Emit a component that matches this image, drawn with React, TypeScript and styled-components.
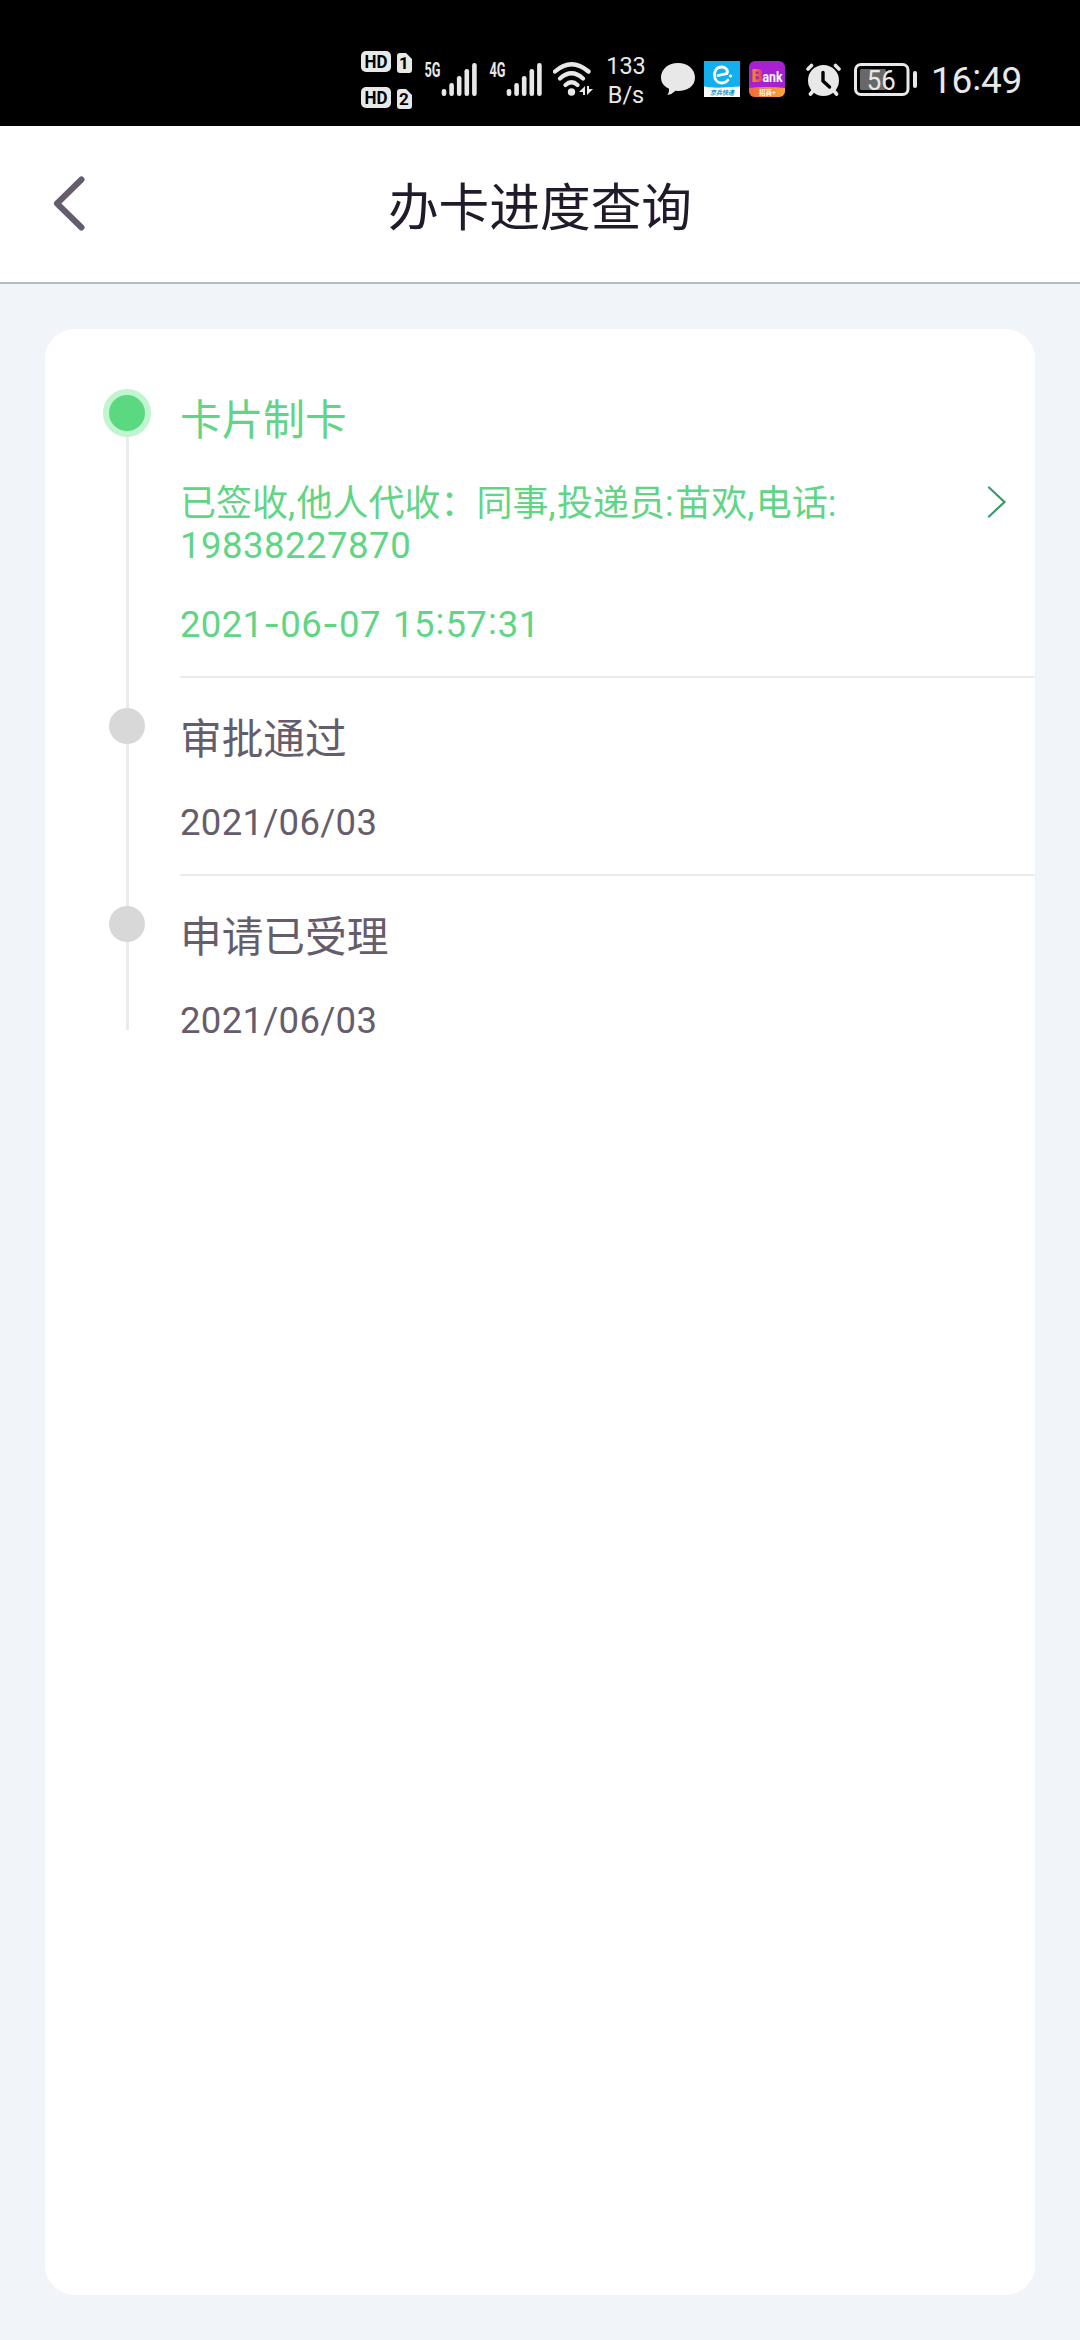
import React from 'react';
import styled, { createGlobalStyle } from 'styled-components';

const INK = '#e8e8e8';
const UI_FONT = `Roboto, 'Noto Sans CJK SC', sans-serif`;

const GlobalStyle = createGlobalStyle`
  html, body { margin: 0; padding: 0; }
  body { background: #f1f5f9; font-family: ${UI_FONT}; }
  * { box-sizing: border-box; }
  svg { display: block; flex: none; }
`;

const Screen = styled.div`
  width: 1080px;
  height: 2340px;
  display: flex;
  flex-direction: column;
  background: #f1f5f9;
  overflow: hidden;
`;

const StatusBar = styled.div`
  flex: none;
  height: 126px;
  padding: 32px 61px 0 0;
  display: flex;
  justify-content: flex-end;
  align-items: center;
  background: #000;
  color: ${INK};
`;

const StatusItem = styled.div<{ $before: number; $width: number }>`
  flex: none;
  width: ${(p) => p.$width}px;
  margin-left: ${(p) => p.$before}px;
`;

const Speed = styled.div`
  padding-top: 3px;
  font-size: 23.5px;
  line-height: 28.5px;
  text-align: center;
  white-space: nowrap;
`;

const Clock = styled.div`
  padding-top: 4px;
  font-size: 37px;
  line-height: 40px;
  letter-spacing: -0.2px;
  white-space: nowrap;
`;

const RaisedColon = styled.span`
  vertical-align: 3px;
  line-height: 0;
`;

const Header = styled.header`
  flex: none;
  height: 158px;
  display: grid;
  grid-template-columns: 140px 1fr 140px;
  align-items: center;
  background: #fff;
  border-bottom: 2px solid #b3bbc4;
`;

const BackButton = styled.button`
  width: 140px;
  height: 60px;
  margin: 0;
  padding: 0 0 0 52px;
  border: 0;
  background: none;
  display: flex;
  align-items: center;
`;

const Title = styled.h1`
  margin: 9px 0 0;
  text-align: center;
  font-size: 50.7px;
  line-height: 60px;
  font-weight: 400;
  color: #201a2b;
`;

const Card = styled.main`
  flex: 1;
  margin: 45px;
  padding-top: 30px;
  background: #fff;
  border-radius: 30px;
`;

const Step = styled.section<{ $height: number }>`
  display: grid;
  grid-template-columns: 135px 1fr;
  grid-template-rows: 100%;
  height: ${(p) => p.$height}px;
`;

const Rail = styled.div`
  width: 48px;
  margin-left: 58px;
  display: flex;
  flex-direction: column;
  align-items: center;
`;

const Line = styled.div<{ $hidden?: boolean; $length?: number }>`
  width: 3px;
  margin-left: 1px;
  flex: ${(p) => (p.$length ? `0 0 ${p.$length}px` : '1')};
  background: ${(p) => (p.$hidden ? 'transparent' : '#ebebeb')};
`;

const Dot = styled.div<{ $active?: boolean }>`
  flex: none;
  width: ${(p) => (p.$active ? 48 : 36)}px;
  height: ${(p) => (p.$active ? 48 : 36)}px;
  border-radius: 50%;
  border: ${(p) => (p.$active ? '6px solid #c0f5cf' : '0')};
  background: ${(p) => (p.$active ? '#5bd980' : '#d8d8d8')};
`;

const StepBody = styled.div<{ $active?: boolean; $divided?: boolean }>`
  display: flex;
  flex-direction: column;
  padding-top: 41px;
  border-bottom: ${(p) => (p.$divided ? '2px solid #ebebeb' : '0')};
  color: ${(p) => (p.$active ? '#5fd585' : '#655d6c')};
`;

const StepTitle = styled.h2`
  margin: 0 0 41px;
  font-size: 41.7px;
  line-height: 42px;
  font-weight: 400;
`;

const Detail = styled.div`
  display: flex;
  justify-content: space-between;
  height: 84px;
  margin-bottom: 36px;
  padding-right: 28px;
`;

const DetailText = styled.p`
  margin: 0;
  width: 700px;
  font-size: 36px;
  line-height: 42px;
`;

const Punctuation = styled.span`
  padding-right: 1.4px;
`;

const Arrow = styled.span`
  padding-top: 3px;
`;

const Digits = styled.span`
  font-size: 36.5px;
  letter-spacing: 0.5px;
`;

const DateText = styled.time`
  font-size: 36.5px;
  line-height: 42px;
  letter-spacing: 0.3px;
  word-spacing: 3px;
  white-space: nowrap;
`;

const Dash = styled.span`
  font-family: Inter, sans-serif;
`;

const DateColon = styled(RaisedColon)`
  padding: 0 0.8px;
`;

type StepData = {
  title: string;
  date: string;
  height: number;
  detail?: string;
  phone?: string;
};

const steps: StepData[] = [
  {
    title: '卡片制卡',
    detail: '已签收,他人代收：同事,投递员:苗欢,电话:',
    phone: '19838227870',
    date: '2021-06-07 15:57:31',
    height: 319,
  },
  { title: '审批通过', date: '2021/06/03', height: 198 },
  { title: '申请已受理', date: '2021/06/03', height: 154 },
];

const HdIcon = () => (
  <svg width="51" height="60" viewBox="0 -2 51 60">
    {[0, 36].map((y, i) => (
      <g key={y} transform={`translate(0 ${y})`}>
        <rect width="30" height="21" rx="5" fill={INK} />
        <text x="15" y="17" textAnchor="middle" textLength="23" lengthAdjust="spacingAndGlyphs" fontFamily="Roboto" fontWeight="700" fontSize="18.5" fill="#000">HD</text>
        <path d="M39 2h6l6 6v11q0 3-3 3h-9q-3 0-3-3V5q0-3 3-3z" fill={INK} />
        <text x="43" y="18" textAnchor="middle" fontFamily="Roboto" fontWeight="700" fontSize="17" fill="#000">{i + 1}</text>
      </g>
    ))}
  </svg>
);

const SignalIcon = ({ label }: { label: string }) => (
  <svg width="53" height="46" viewBox="0 -6 53 46">
    <text x="0.5" y="14.500" textLength="16" lengthAdjust="spacingAndGlyphs" fontFamily="Roboto" fontWeight="700" fontSize="20" fill={INK}>{label}</text>
    {[7, 13, 20, 27, 33].map((h, i) => (
      <rect key={h} x={17.7 + i * 7.6} y={34 - h} width="4.6" height={h} rx="2.2" fill={INK} />
    ))}
  </svg>
);

const WifiIcon = () => (
  <svg width="40" height="34" viewBox="0 0 40 34">
    <g fill="none" stroke={INK} strokeWidth="4.300" strokeLinecap="round">
      <path d="M2 9.500Q18.500-5 35.500 9.500" />
      <path d="M7 16.500Q18.500 6 30 16.500" />
      <path d="M12.500 23Q18.500 17.500 24.500 23" />
    </g>
    <circle cx="18.500" cy="30" r="3.700" fill={INK} />
    <path d="M26 30l6-6v9h-2v-3zM34 24v9l6-6h-4v-3z" fill={INK} />
  </svg>
);

const BubbleIcon = () => (
  <svg width="34" height="33" viewBox="0 0 34 33">
    <path d="M17 0C26.500 0 34 6 34 14.500S26.500 28 17 28L14.500 27.800Q11 31.500 6.500 32Q8.500 29.500 8 25.800C3 23.500 0 19.500 0 14.500C0 6 7.500 0 17 0z" fill={INK} />
  </svg>
);

const ExpressAppIcon = () => (
  <svg width="36" height="36" viewBox="0 0 36 36">
    <rect width="36" height="36" fill="#12b0f0" />
    <path d="M0 25.500Q8 27 18 26.500T36 25.500V36H0z" fill="#fff" />
    <path d="M14 14.500L23 12.500C24.500 8.500 21 6 17.500 6C12.500 6 10.500 10 10.500 14C10.500 19 13.500 22 18 22C21 22 22.500 21 24 19" fill="none" stroke="#fff" strokeWidth="2.800" strokeLinecap="round" />
    <circle cx="26.500" cy="15" r="1.600" fill="#fff" />
    <text x="18" y="34" textAnchor="middle" textLength="24" lengthAdjust="spacingAndGlyphs" fontFamily="Noto Sans CJK SC" fontWeight="700" fontStyle="italic" fontSize="6.500" fill="#1690c8">京兵快递</text>
  </svg>
);

const BankAppIcon = () => (
  <svg width="36" height="36" viewBox="0 0 36 36">
    <defs>
      <clipPath id="bankClip"><rect width="36" height="36" rx="6" /></clipPath>
      <linearGradient id="bankBase"><stop stopColor="#f46a3a" /><stop offset="1" stopColor="#f8a53a" /></linearGradient>
      <linearGradient id="bankLetter"><stop stopColor="#f5923a" /><stop offset="1" stopColor="#e83c48" /></linearGradient>
    </defs>
    <g clipPath="url(#bankClip)">
      <rect width="36" height="36" fill="#a721d2" />
      <path d="M0 27Q18 25 36 27V36H0z" fill="url(#bankBase)" />
      <text x="2.500" y="21" textLength="11" lengthAdjust="spacingAndGlyphs" fontFamily="Roboto" fontWeight="900" fontSize="18.500" fill="url(#bankLetter)">B</text>
      <text x="13.500" y="20.500" textLength="20" lengthAdjust="spacingAndGlyphs" fontFamily="Roboto" fontWeight="700" fontSize="14.500" fill="#fff">ank</text>
      <text x="18.500" y="34" textAnchor="middle" fontFamily="Noto Sans CJK SC" fontWeight="700" fontSize="6.500" fill="#fff">招商+</text>
    </g>
  </svg>
);

const AlarmIcon = () => (
  <svg width="35" height="33" viewBox="0 0 35 33">
    <g stroke={INK} strokeWidth="3.600" strokeLinecap="round">
      <path d="M2 6L5.500 2.500M33 6L29.500 2.500M7 28L4.500 31M28 28L30.500 31" />
    </g>
    <circle cx="17.500" cy="17.500" r="15.500" fill={INK} />
    <path d="M17 9.500V18L23.500 24" fill="none" stroke="#000" strokeWidth="3.400" strokeLinecap="round" />
  </svg>
);

const BatteryIcon = () => (
  <svg width="63" height="33" viewBox="0 0 63 33">
    <rect x="1.500" y="1.500" width="52.500" height="30" rx="5.500" fill="none" stroke={INK} strokeWidth="3" />
    <rect x="6" y="6" width="26" height="21" rx="1.500" fill="#686868" />
    <rect x="59" y="8" width="4" height="17" rx="2" fill={INK} />
    <text x="27.300" y="26.500" textAnchor="middle" textLength="29" lengthAdjust="spacingAndGlyphs" fontFamily="Roboto" fontSize="27" fill={INK}>56</text>
  </svg>
);

const Timestamp = ({ value }: { value: string }) => (
  <DateText>
    {value.split(/([-:])/).map((part, i) => {
      if (part === '-') return <Dash key={i}>-</Dash>;
      if (part === ':') return <DateColon key={i}>:</DateColon>;
      return part;
    })}
  </DateText>
);

const Message = ({ value }: { value: string }) => (
  <>
    {value.split(/([,:])/).map((part, i) =>
      part === ',' || part === ':' ? <Punctuation key={i}>{part}</Punctuation> : part,
    )}
  </>
);

export default function App() {
  return (
    <Screen>
      <GlobalStyle />
      <StatusBar>
        <StatusItem $before={0} $width={51}><HdIcon /></StatusItem>
        <StatusItem $before={12} $width={53}><SignalIcon label="5G" /></StatusItem>
        <StatusItem $before={12} $width={53}><SignalIcon label="4G" /></StatusItem>
        <StatusItem $before={11} $width={40}><WifiIcon /></StatusItem>
        <StatusItem $before={12} $width={42}><Speed>133<br />B/s</Speed></StatusItem>
        <StatusItem $before={14} $width={34}><BubbleIcon /></StatusItem>
        <StatusItem $before={9} $width={36}><ExpressAppIcon /></StatusItem>
        <StatusItem $before={9} $width={36}><BankAppIcon /></StatusItem>
        <StatusItem $before={21} $width={35}><AlarmIcon /></StatusItem>
        <StatusItem $before={13} $width={63}><BatteryIcon /></StatusItem>
        <StatusItem $before={14} $width={88}><Clock>16<RaisedColon>:</RaisedColon>49</Clock></StatusItem>
      </StatusBar>
      <Header>
        <BackButton aria-label="返回">
          <svg width="34" height="56" viewBox="0 0 34 56">
            <path d="M29.500 3.500L5 27.500L29.500 51.500" fill="none" stroke="#655d6c" strokeWidth="6" strokeLinecap="round" strokeLinejoin="round" />
          </svg>
        </BackButton>
        <Title>办卡进度查询</Title>
      </Header>
      <Card>
        {steps.map((step, i) => {
          const active = i === 0;
          return (
            <Step key={step.title} $height={step.height}>
              <Rail>
                <Line $length={30} $hidden={active} />
                <Dot $active={active} />
                <Line />
              </Rail>
              <StepBody $active={active} $divided={i < steps.length - 1}>
                <StepTitle>{step.title}</StepTitle>
                {step.detail && (
                  <Detail>
                    <DetailText>
                      <Message value={step.detail} />
                      <br />
                      <Digits>{step.phone}</Digits>
                    </DetailText>
                    <Arrow>
                      <svg width="20" height="32" viewBox="0 0 20 32">
                        <path d="M2 1.500L17.500 16L2 30.500" fill="none" stroke="#399a69" strokeWidth="2.200" strokeLinecap="round" />
                      </svg>
                    </Arrow>
                  </Detail>
                )}
                <Timestamp value={step.date} />
              </StepBody>
            </Step>
          );
        })}
      </Card>
    </Screen>
  );
}
